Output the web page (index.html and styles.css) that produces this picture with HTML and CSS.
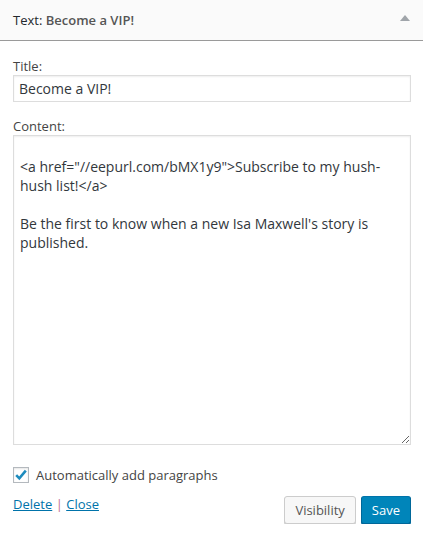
FILE: index.html
```html
<!DOCTYPE html>
<html>
<head>
<meta charset="utf-8">
<link rel="stylesheet" href="styles.css">
</head>
<body>
<div class="widget">
  <div class="widget-top">
    <h3 class="widget-title">Text:<span class="in-title"> Become a VIP!</span></h3>
    <span class="toggle"></span>
  </div>
  <div class="widget-inside">
    <label class="field-label" for="t">Title:</label>
    <input id="t" class="text-input" type="text" value="Become a VIP!">
    <label class="field-label second" for="c">Content:</label>
    <textarea id="c" class="content-area">

&lt;a href="//eepurl.com/bMX1y9"&gt;Subscribe to my hush-hush list!&lt;/a&gt;

Be the first to know when a new Isa Maxwell's story is published.</textarea>
    <div class="check-row">
      <span class="checkbox">
        <svg width="14" height="14" viewBox="0 0 14 14"><path d="M2.2 7.2 L5.3 10.3 L11.8 2.6" fill="none" stroke="#1e8cbe" stroke-width="2.6" stroke-linejoin="miter"/></svg>
      </span>
      <span class="check-label">Automatically add paragraphs</span>
    </div>
    <div class="footer">
      <div class="links"><a href="#">Delete</a> <span class="sep">|</span> <a href="#">Close</a></div>
      <div class="buttons">
        <button class="btn">Visibility</button>
        <button class="btn primary">Save</button>
      </div>
    </div>
  </div>
</div>
</body>
</html>
```
FILE: styles.css
```css
html, body {
  margin: 0;
  padding: 0;
  background: #fff;
}
body {
  font-family: "Open Sans", "Liberation Sans", sans-serif;
  font-size: 13px;
  color: #444;
}
.widget {
  width: 423px;
}
.widget-top {
  height: 40px;
  background: #fafafa;
  border-bottom: 1px solid #9a9a9a;
  display: flex;
  align-items: center;
  justify-content: space-between;
  padding: 0 12px 0 13px;
}
.widget-title {
  margin: 0;
  font-size: 13px;
  font-weight: 400;
  color: #23282d;
  line-height: 18px;
}
.in-title {
  font-weight: 600;
  color: #555;
}
.toggle {
  width: 0;
  height: 0;
  border-left: 5px solid transparent;
  border-right: 5px solid transparent;
  border-bottom: 6px solid #a0a5aa;
  margin-right: 1px;
  margin-top: -4px;
}
.widget-inside {
  padding: 16px 12px 0 13px;
}
.field-label {
  display: block;
  line-height: 18px;
  color: #444;
}
.field-label.second {
  margin-top: 15px;
}
.text-input {
  display: block;
  box-sizing: border-box;
  width: 100%;
  height: 27px;
  margin: 0;
  padding: 2px 5px;
  border: 1px solid #ddd;
  box-shadow: inset 0 1px 2px rgba(0,0,0,.07);
  font-family: "Open Sans", "Liberation Sans", sans-serif;
  font-size: 14px;
  color: #32373c;
  outline: none;
}
.content-area {
  display: block;
  box-sizing: border-box;
  width: 100%;
  height: 310px;
  margin: 0;
  padding: 2px 6px;
  border: 1px solid #ddd;
  box-shadow: inset 0 1px 2px rgba(0,0,0,.07);
  font-family: "Open Sans", "Liberation Sans", sans-serif;
  font-size: 14px;
  line-height: 19px;
  color: #32373c;
  outline: none;
  resize: vertical;
  overflow: hidden;
}
.check-row {
  display: flex;
  align-items: center;
  gap: 7px;
  margin-top: 22px;
  height: 16px;
}
.checkbox {
  box-sizing: border-box;
  width: 16px;
  height: 16px;
  border: 1px solid #b4b9be;
  background: #fff;
  box-shadow: inset 0 1px 2px rgba(0,0,0,.1);
  display: flex;
  align-items: center;
  justify-content: center;
}
.check-label {
  line-height: 18px;
  color: #444;
}
.footer {
  display: flex;
  justify-content: space-between;
  align-items: flex-start;
  margin-top: 12px;
}
.links {
  line-height: 18px;
  padding-top: 0;
}
.links a {
  color: #0073aa;
  text-decoration: underline;
}
.sep {
  color: #c47088;
  margin: 0;
}
.buttons {
  display: flex;
  gap: 5px;
  padding-top: 1px;
}
.btn {
  box-sizing: border-box;
  height: 28px;
  padding: 0 10px 1px;
  border: 1px solid #ccc;
  border-radius: 3px;
  background: #f7f7f7;
  box-shadow: 0 1px 0 #ccc;
  color: #555;
  font-family: "Open Sans", "Liberation Sans", sans-serif;
  font-size: 13px;
  line-height: 26px;
  cursor: pointer;
}
.btn.primary {
  background: #0085ba;
  border-color: #0073aa #006799 #006799;
  box-shadow: 0 1px 0 #006799;
  color: #fff;
  min-width: 50px;
}
```
